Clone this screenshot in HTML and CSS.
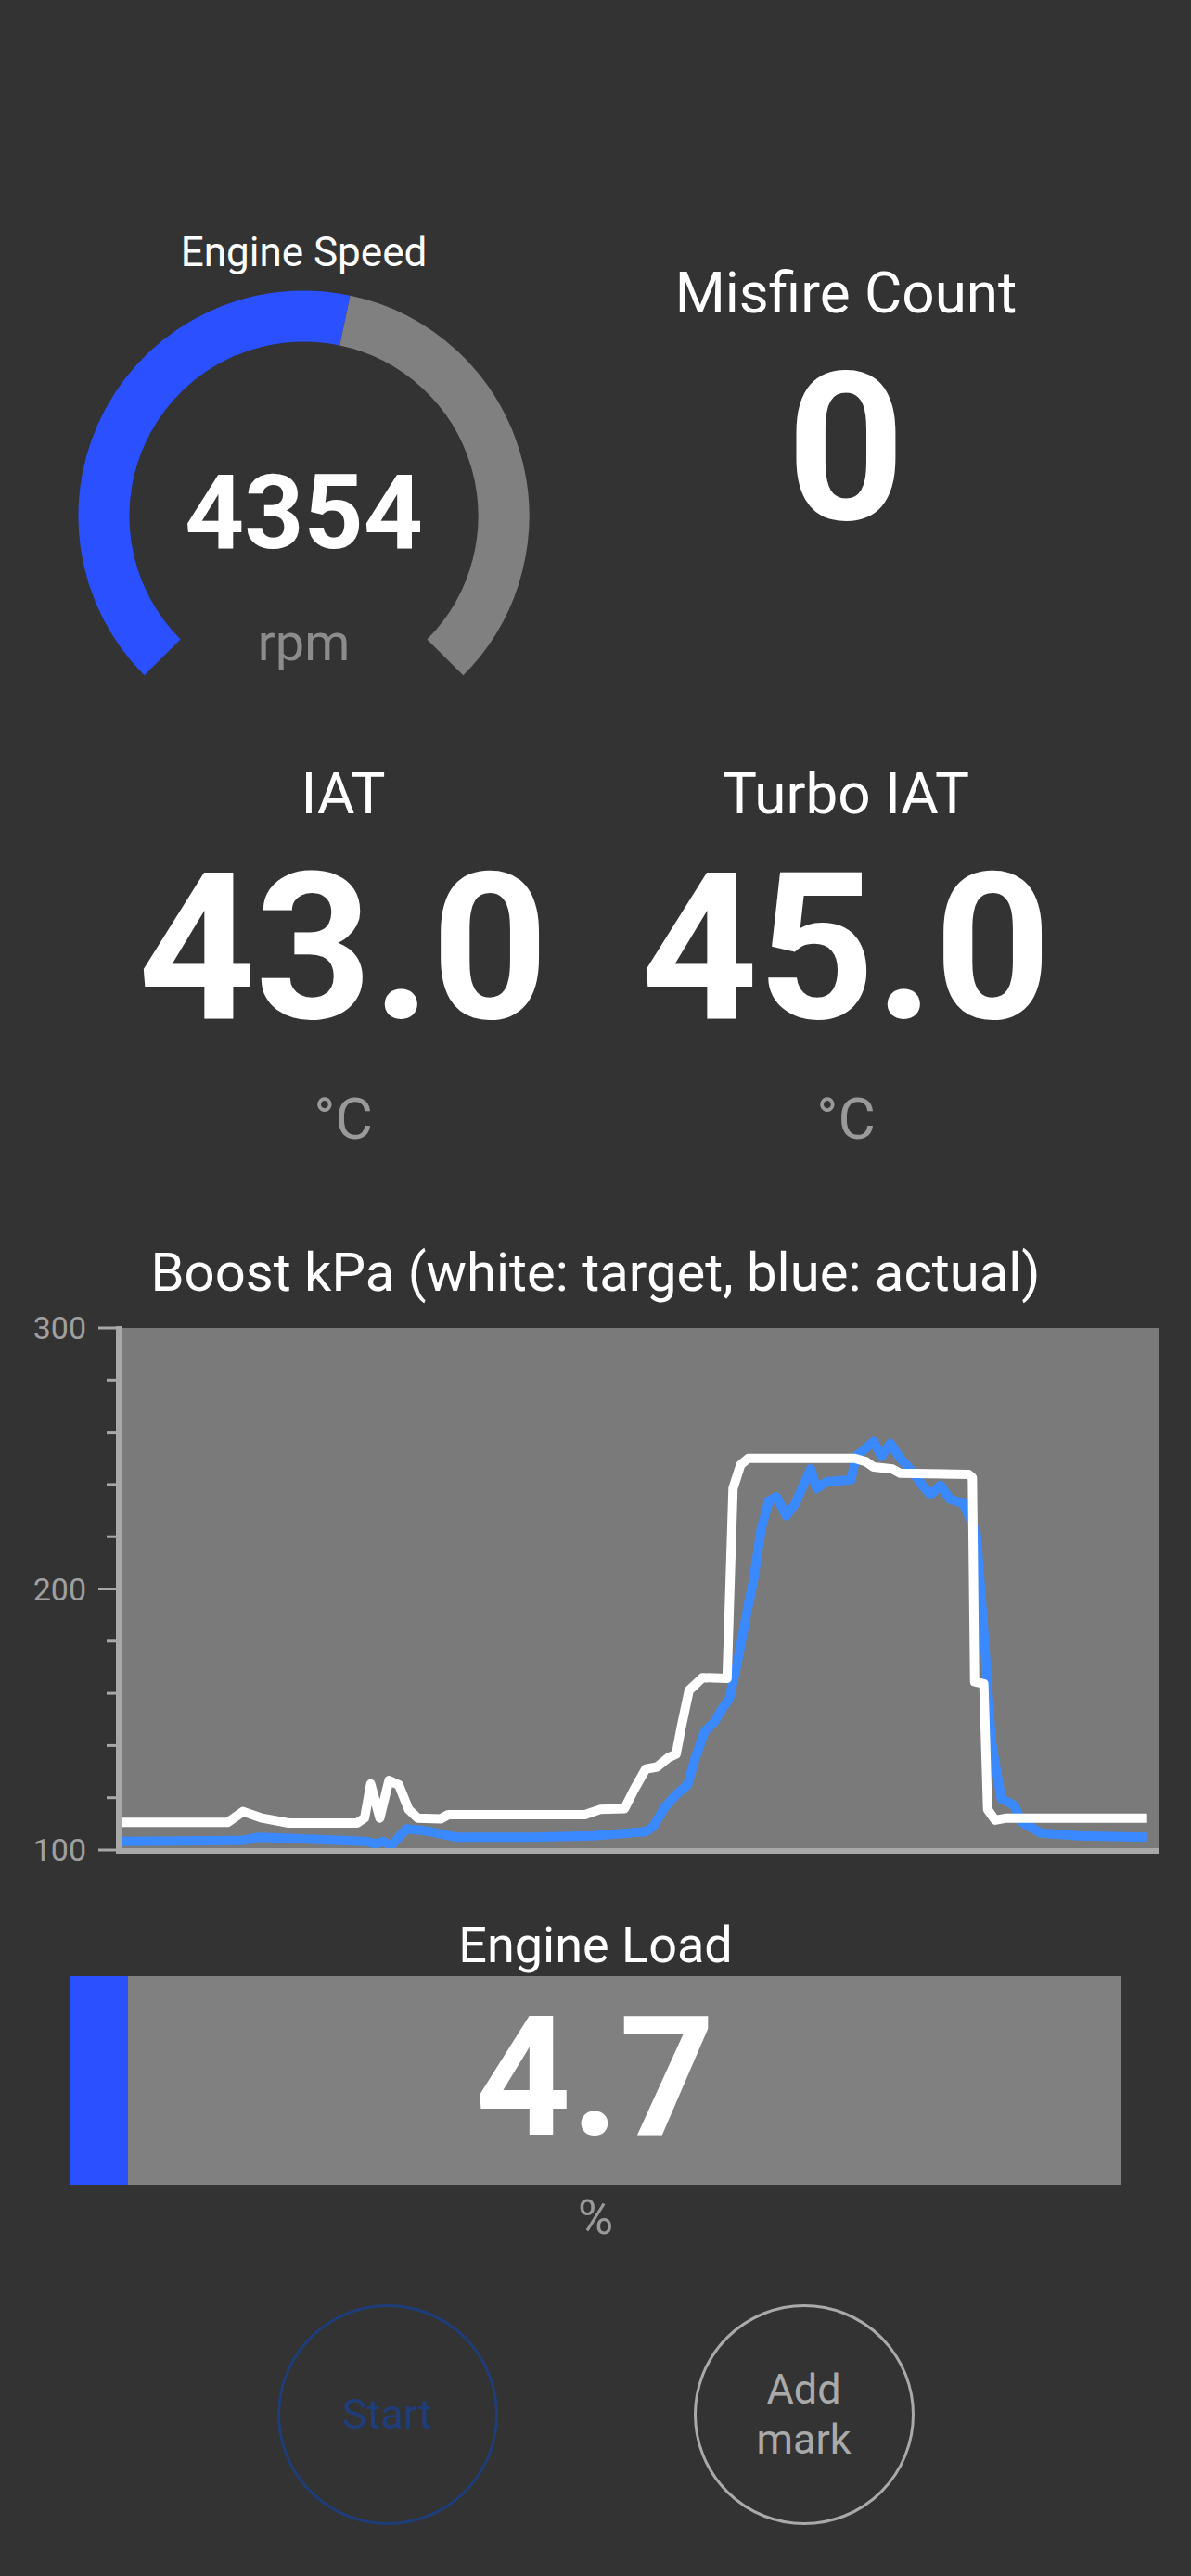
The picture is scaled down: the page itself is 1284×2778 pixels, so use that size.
FILE: index.html
```html
<!DOCTYPE html>
<html lang="en">
<head>
    <meta charset="UTF-8">
    <meta name="viewport" content="width=device-width, initial-scale=1.0">
    <title>Engine Dashboard</title>
    <link rel="stylesheet" href="styles.css">
</head>
<body>

    <div class="fila-top">
        <div class="gauge">
            <div class="gauge-titulo">Engine Speed</div>
            <svg class="gauge-arco" width="487" height="416" viewBox="0 0 487 416">
                <path d="M 91.1 395.9 A 215.5 215.5 0 0 1 287.9 32.6" class="arco-valor"/>
                <path d="M 287.9 32.6 A 215.5 215.5 0 0 1 395.9 395.9" class="arco-resto"/>
                <text x="243.5" y="278" class="gauge-numero">4354</text>
                <text x="243.5" y="399" class="gauge-unidad">rpm</text>
            </svg>
        </div>
        <div class="contador">
            <div class="etiqueta">Misfire Count</div>
            <div class="contador-valor">0</div>
        </div>
    </div>

    <div class="fila-temp">
        <div class="temp">
            <div class="etiqueta">IAT</div>
            <div class="temp-valor">43.0</div>
            <div class="temp-unidad">°C</div>
        </div>
        <div class="temp">
            <div class="etiqueta">Turbo IAT</div>
            <div class="temp-valor">45.0</div>
            <div class="temp-unidad">°C</div>
        </div>
    </div>

    <div class="grafica-titulo">Boost kPa (white: target, blue: actual)</div>
    <svg class="grafica" width="1284" height="610" viewBox="0 0 1284 610">
        <rect x="131" y="20" width="1118" height="563" class="fondo-grafica"/>
        <g class="marcas">
            <line x1="106" y1="20" x2="126" y2="20"/>
            <line x1="115" y1="76.3" x2="126" y2="76.3"/>
            <line x1="115" y1="132.6" x2="126" y2="132.6"/>
            <line x1="115" y1="188.9" x2="126" y2="188.9"/>
            <line x1="115" y1="245.2" x2="126" y2="245.2"/>
            <line x1="106" y1="301.5" x2="126" y2="301.5"/>
            <line x1="115" y1="357.8" x2="126" y2="357.8"/>
            <line x1="115" y1="414.1" x2="126" y2="414.1"/>
            <line x1="115" y1="470.4" x2="126" y2="470.4"/>
            <line x1="115" y1="526.7" x2="126" y2="526.7"/>
            <line x1="106" y1="583" x2="126" y2="583"/>
        </g>
        <text x="93" y="32" class="eje-texto">300</text>
        <text x="93" y="313.5" class="eje-texto">200</text>
        <text x="93" y="595" class="eje-texto">100</text>
        <svg x="131" y="20" width="1118" height="563" viewBox="0 0 1000 200" preserveAspectRatio="none">
            <polyline class="linea-real" points="0,196.7 117.2,196.3 131.9,195.1 161.2,195.6 234.4,196.7 245.4,197.6 252.7,196.7 260,198.4 274.7,191.9 293,192.7 322.3,195.1 395.6,195.1 454.2,194.6 505.5,193 512.8,191 523.8,183.7 534.8,178.8 545.8,175.1 553.1,165 562.6,154.4 571.4,151.1 578.7,146.2 586.1,142.1 593.4,129.1 604.4,106.3 609.5,96.5 616.9,76.9 624.2,66.3 631.5,64.7 641.1,72 649.9,67.2 657.1,60.6 664.5,54.1 670.3,61.5 679.9,59 703.3,58.2 708.5,49.2 718,46 725.3,43.5 732.7,49.2 741.5,44.3 751,50 762,54.9 772.9,60.6 780.2,63.9 789.8,60.3 798.6,65.5 811.7,67.2 824.2,78.6 831.5,116.1 838.8,158.4 848.4,180.4 860.8,182.9 868.2,189.4 886.4,193.5 923,194.6 989,195.1"/>
            <polyline class="linea-objetivo" points="0,189.4 102.6,189.4 117.2,185.3 135.5,187.8 161.2,189.7 227.1,189.7 234.4,187.8 240.3,174.7 249.1,187.8 257.9,173.4 267.4,175.1 276.9,184.5 285.7,187.8 307.7,188.1 315,186.5 395.6,186.5 446.9,186.5 461.5,184.5 485,184.2 494.5,176.7 505.5,169 516.5,168.2 527.5,164.6 534.8,163.3 539.9,152.7 547.3,138.9 560.4,134 583.9,134.3 589.7,61.5 597,52.5 604.4,50 707,50 718,51.3 725.3,53.3 743.6,54.1 751,55.7 816.8,56.1 820.5,57.4 822.7,135.6 831.5,136.4 835.2,184.5 842.5,188.6 853.5,187.8 989,187.8"/>
        </svg>
        <rect x="125" y="18" width="6" height="568" class="eje"/>
        <rect x="125" y="581" width="1124" height="6" class="eje"/>
    </svg>

    <div class="carga-titulo">Engine Load</div>
    <div class="barra">
        <div class="barra-relleno" style="width: 5.6%"></div>
        <div class="barra-valor">4.7</div>
    </div>
    <div class="carga-unidad">%</div>

    <div class="botones">
        <button class="boton boton-start">Start</button>
        <button class="boton boton-mark">Add<br>mark</button>
    </div>

</body>
</html>
```

FILE: styles.css
```css
body {
    margin: 0;
    padding-top: 250px;
    background-color: #333333;
    color: #fff;
    font-family: Roboto, "Liberation Sans", sans-serif;
    height: 2778px;
    box-sizing: border-box;
}

.fila-top {
    display: flex;
    justify-content: space-between;
    align-items: flex-start;
    padding: 0 101px 0 84px;
}

.gauge {
    width: 487px;
}

.gauge-titulo {
    font-size: 44px;
    line-height: 1;
    text-align: center;
    margin-bottom: 19px;
}

.gauge-arco {
    display: block;
}

.arco-valor {
    fill: none;
    stroke: #2a50ff;
    stroke-width: 55;
}

.arco-resto {
    fill: none;
    stroke: #808080;
    stroke-width: 55;
}

.gauge-numero {
    font-family: Roboto, "Liberation Sans", sans-serif;
    font-size: 112px;
    font-weight: 700;
    fill: #fff;
    text-anchor: middle;
}

.gauge-unidad {
    font-family: Roboto, "Liberation Sans", sans-serif;
    font-size: 56px;
    fill: #8c8c8c;
    text-anchor: middle;
}

.contador {
    width: 542px;
    padding-top: 35px;
    text-align: center;
}

.etiqueta {
    font-size: 62px;
    line-height: 1;
}

.contador-valor {
    font-size: 222px;
    font-weight: 700;
    line-height: 1;
    margin-top: 26px;
}

.fila-temp {
    display: grid;
    grid-template-columns: 542px 542px;
    padding-left: 99px;
    margin-top: 96px;
}

.temp {
    text-align: center;
}

.temp-valor {
    font-size: 220px;
    font-weight: 700;
    line-height: 1;
    margin-top: 26px;
}

.temp-unidad {
    font-size: 62px;
    line-height: 1;
    color: #9a9a9a;
    margin-top: 43px;
}

.grafica-titulo {
    font-size: 58px;
    line-height: 1;
    text-align: center;
    margin-top: 105px;
}

.grafica {
    display: block;
    margin-top: 11px;
}

.fondo-grafica {
    fill: #7a7a7a;
}

.marcas line {
    stroke: #a8a8a8;
    stroke-width: 3;
}

.eje {
    fill: #a8a8a8;
}

.eje-texto {
    font-family: Roboto, "Liberation Sans", sans-serif;
    font-size: 34px;
    fill: #a0a0a0;
    text-anchor: end;
}

.linea-real {
    fill: none;
    stroke: #3b89ff;
    stroke-width: 10;
    stroke-linejoin: round;
    vector-effect: non-scaling-stroke;
}

.linea-objetivo {
    fill: none;
    stroke: #fff;
    stroke-width: 10;
    stroke-linejoin: round;
    vector-effect: non-scaling-stroke;
}

.carga-titulo {
    font-size: 54px;
    line-height: 1;
    text-align: center;
    margin-top: 49px;
}

.barra {
    position: relative;
    height: 225px;
    margin: 6px 76px 0 75px;
    background-color: #808080;
    display: flex;
    justify-content: center;
    align-items: center;
}

.barra-relleno {
    position: absolute;
    left: 0;
    top: 0;
    bottom: 0;
    background-color: #2a50ff;
}

.barra-valor {
    position: relative;
    font-size: 180px;
    font-weight: 700;
    line-height: 1;
    padding-bottom: 6px;
}

.carga-unidad {
    font-size: 52px;
    line-height: 1;
    color: #9a9a9a;
    text-align: center;
    margin-top: 10px;
}

.botones {
    display: flex;
    justify-content: center;
    gap: 211px;
    margin-top: 67px;
}

.boton {
    width: 238px;
    height: 238px;
    border-radius: 50%;
    background: transparent;
    font-family: Roboto, "Liberation Sans", sans-serif;
    font-size: 45px;
    line-height: 54px;
    padding: 0;
    cursor: pointer;
}

.boton-start {
    border: 3px solid #1f3d78;
    color: #1f3d78;
}

.boton-mark {
    border: 3px solid #aaaaaa;
    color: #aaaaaa;
}
```
